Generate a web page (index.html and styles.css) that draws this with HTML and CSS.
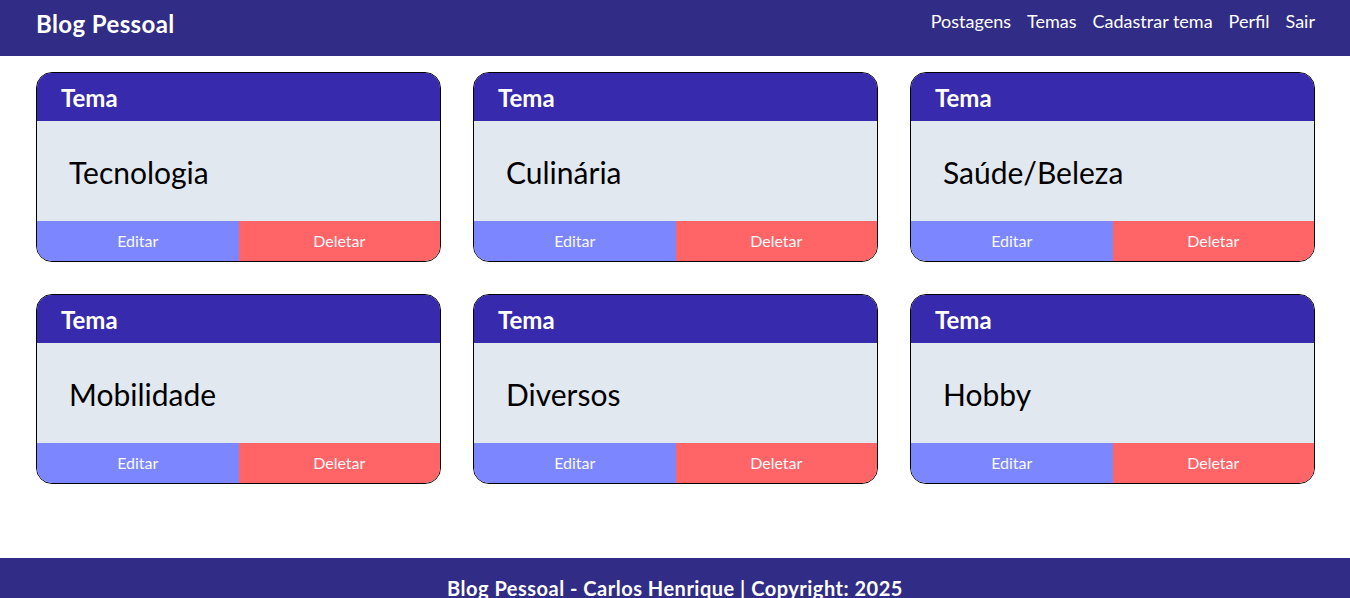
FILE: index.html
```html
<!DOCTYPE html>
<html lang="pt-BR">
<head>
<meta charset="utf-8">
<title>Blog Pessoal</title>
<link rel="stylesheet" href="styles.css">
</head>
<body>
<header class="navbar">
  <div class="container nav-inner">
    <div class="brand">Blog Pessoal</div>
    <nav class="nav-links">
      <a href="#">Postagens</a>
      <a href="#">Temas</a>
      <a href="#">Cadastrar tema</a>
      <a href="#">Perfil</a>
      <a href="#">Sair</a>
    </nav>
  </div>
</header>
<main class="main">
  <div class="container grid">
    <div class="card"><div class="card-head">Tema</div><div class="card-body">Tecnologia</div><div class="card-actions"><a class="btn btn-edit" href="#">Editar</a><a class="btn btn-del" href="#">Deletar</a></div></div>
    <div class="card"><div class="card-head">Tema</div><div class="card-body">Culinária</div><div class="card-actions"><a class="btn btn-edit" href="#">Editar</a><a class="btn btn-del" href="#">Deletar</a></div></div>
    <div class="card"><div class="card-head">Tema</div><div class="card-body">Saúde/Beleza</div><div class="card-actions"><a class="btn btn-edit" href="#">Editar</a><a class="btn btn-del" href="#">Deletar</a></div></div>
    <div class="card"><div class="card-head">Tema</div><div class="card-body">Mobilidade</div><div class="card-actions"><a class="btn btn-edit" href="#">Editar</a><a class="btn btn-del" href="#">Deletar</a></div></div>
    <div class="card"><div class="card-head">Tema</div><div class="card-body">Diversos</div><div class="card-actions"><a class="btn btn-edit" href="#">Editar</a><a class="btn btn-del" href="#">Deletar</a></div></div>
    <div class="card"><div class="card-head">Tema</div><div class="card-body">Hobby</div><div class="card-actions"><a class="btn btn-edit" href="#">Editar</a><a class="btn btn-del" href="#">Deletar</a></div></div>
  </div>
</main>
<footer class="footer">
  <p class="footer-text">Blog Pessoal - Carlos Henrique | Copyright: 2025</p>
</footer>
</body>
</html>
```
FILE: styles.css
```css
* { box-sizing: border-box; }
html, body { margin: 0; padding: 0; }
body {
  font-family: "Lato", "Noto Sans", sans-serif;
  color: #000;
  background: #fff;
}
.container {
  width: 1280px;
  margin: 0 auto;
}
.navbar {
  background: #312c85;
  color: #fff;
  padding: 8px 0 16px;
}
.nav-inner {
  display: flex;
  justify-content: space-between;
  align-items: flex-start;
  padding-left: 1px;
}
.brand {
  font-size: 24px;
  line-height: 32px;
  font-weight: 700;
  letter-spacing: 0.4px;
}
.nav-links {
  display: flex;
  gap: 16px;
  margin-top: -1px;
}
.nav-links a {
  color: #fff;
  text-decoration: none;
  font-size: 18px;
  line-height: 28px;
}
.main {
  min-height: 502px;
  padding: 16px 0;
}
.grid {
  display: grid;
  grid-template-columns: repeat(3, 1fr);
  gap: 32px;
  padding-left: 1px;
}
.card {
  border: 1px solid #000;
  border-radius: 16px;
  overflow: hidden;
  display: flex;
  flex-direction: column;
}
.card-head {
  background: #372aac;
  color: #fff;
  font-weight: 700;
  font-size: 24px;
  line-height: 32px;
  padding: 9px 24px 7px;
}
.card-body {
  background: #e2e8f0;
  font-size: 30px;
  line-height: 36px;
  padding: 33px 32px 31px;
}
.card-actions {
  display: flex;
}
.btn {
  flex: 1;
  text-align: center;
  color: #f8fafc;
  text-decoration: none;
  font-size: 16px;
  line-height: 24px;
  padding: 8px 0;
}
.btn-edit { background: #7c86ff; }
.btn-del { background: #ff6467; }
.footer {
  background: #312c85;
  color: #fff;
  padding: 16px 0;
}
.footer-text {
  margin: 0;
  text-align: center;
  font-size: 20px;
  line-height: 28px;
  font-weight: 700;
  letter-spacing: 0.5px;
}
```
